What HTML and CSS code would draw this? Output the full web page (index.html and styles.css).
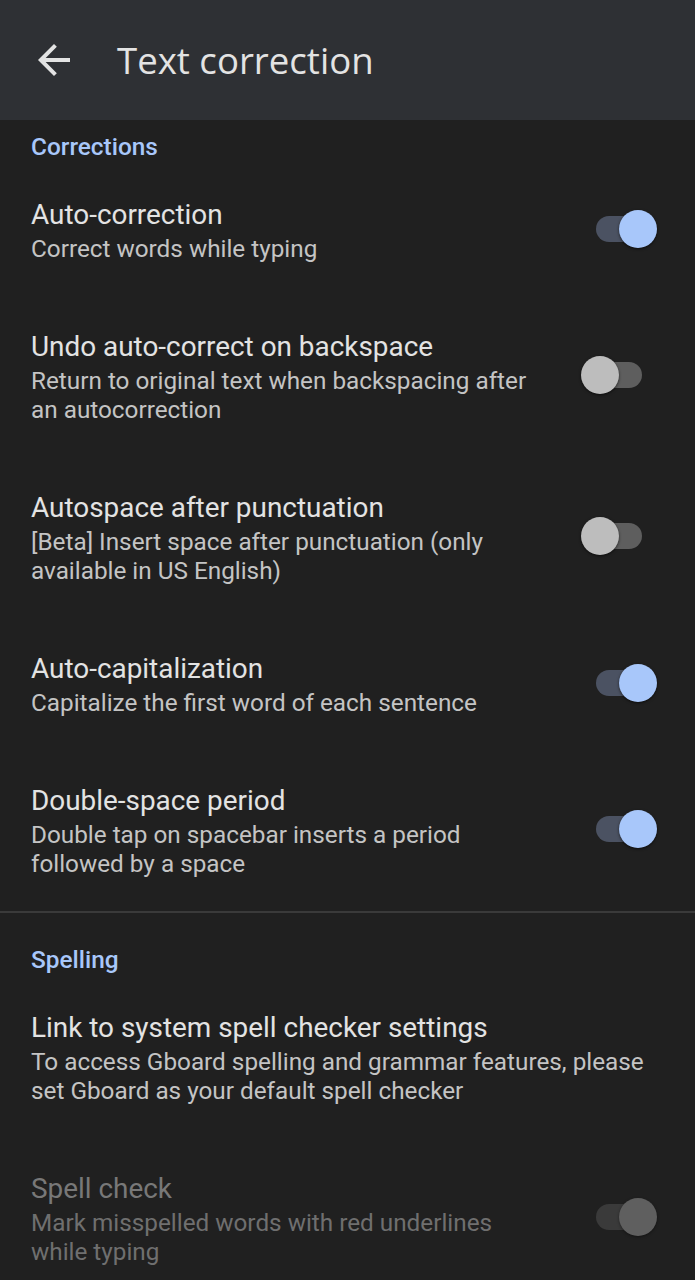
FILE: index.html
```html
<!DOCTYPE html>
<html>
<head>
<meta charset="utf-8">
<link rel="stylesheet" href="styles.css">
</head>
<body>
<div class="app">
  <header class="topbar">
    <svg class="back" viewBox="0 0 24 24" width="48" height="48"><path d="M20 11H7.83l5.59-5.59L12 4l-8 8 8 8 1.41-1.41L7.83 13H20v-2z" fill="#e3e3e3"/></svg>
    <h1 class="title">Text correction</h1>
  </header>

  <div class="category first">Corrections</div>

  <div class="row">
    <div class="text">
      <div class="label">Auto-correction</div>
      <div class="sub">Correct words while typing</div>
    </div>
    <div class="switch on"><span class="track"></span><span class="thumb"></span></div>
  </div>

  <div class="row">
    <div class="text">
      <div class="label">Undo auto-correct on backspace</div>
      <div class="sub">Return to original text when backspacing after an autocorrection</div>
    </div>
    <div class="switch off"><span class="track"></span><span class="thumb"></span></div>
  </div>

  <div class="row">
    <div class="text">
      <div class="label">Autospace after punctuation</div>
      <div class="sub">[Beta] Insert space after punctuation (only available in US English)</div>
    </div>
    <div class="switch off"><span class="track"></span><span class="thumb"></span></div>
  </div>

  <div class="row">
    <div class="text">
      <div class="label">Auto-capitalization</div>
      <div class="sub">Capitalize the first word of each sentence</div>
    </div>
    <div class="switch on"><span class="track"></span><span class="thumb"></span></div>
  </div>

  <div class="row">
    <div class="text">
      <div class="label">Double-space period</div>
      <div class="sub">Double tap on spacebar inserts a period followed by a space</div>
    </div>
    <div class="switch on"><span class="track"></span><span class="thumb"></span></div>
  </div>

  <div class="divider"></div>

  <div class="category">Spelling</div>

  <div class="row">
    <div class="text wide">
      <div class="label">Link to system spell checker settings</div>
      <div class="sub">To access Gboard spelling and grammar features, please set Gboard as your default spell checker</div>
    </div>
  </div>

  <div class="row disabled">
    <div class="text">
      <div class="label">Spell check</div>
      <div class="sub">Mark misspelled words with red underlines while typing</div>
    </div>
    <div class="switch on dis"><span class="track"></span><span class="thumb"></span></div>
  </div>
</div>
</body>
</html>
```

FILE: styles.css
```css
html, body {
  margin: 0;
  padding: 0;
  background: #202020;
}
.app {
  width: 695px;
  height: 1280px;
  overflow: hidden;
  background: #202020;
  font-family: Roboto, "Liberation Sans", sans-serif;
}
.topbar {
  height: 120px;
  background: #2e3034;
  display: flex;
  align-items: center;
}
.back {
  margin-left: 30px;
  flex: none;
}
.title {
  margin: 0 0 0 39px;
  font-family: "Open Sans", Roboto, sans-serif;
  font-weight: 400;
  font-size: 36.6px;
  color: #e3e3e3;
  line-height: 40px;
}
.category {
  padding: 33px 31px 4px;
  font-size: 24.4px;
  font-weight: 500;
  line-height: 28px;
  color: #a8c7fa;
}
.category.first {
  padding-top: 13px;
}
.row {
  display: flex;
  align-items: center;
  padding: 33px 38px 34px 31px;
}
.text {
  flex: 1;
  max-width: 505px;
  margin-right: auto;
}
.text.wide {
  max-width: none;
}
.label {
  font-size: 27.9px;
  line-height: 34px;
  color: #e3e3e3;
  margin-bottom: 2px;
}
.sub {
  font-size: 24.3px;
  line-height: 29px;
  color: #c4c4c4;
}
.disabled .label { color: #787878; }
.disabled .sub { color: #6f6f6f; }
.switch {
  position: relative;
  width: 76px;
  height: 38px;
  flex: none;
  margin-top: -4px;
}
.track {
  position: absolute;
  left: 15px;
  top: 6px;
  width: 46px;
  height: 26px;
  border-radius: 13px;
}
.thumb {
  position: absolute;
  top: 0;
  width: 38px;
  height: 38px;
  border-radius: 50%;
  box-shadow: 0 1px 3px rgba(0,0,0,0.6);
}
.on .track { background: #4b5262; }
.on .thumb { left: 38px; background: #a8c7fa; }
.off .track { background: #5e5e5e; }
.off .thumb { left: 0; background: #bdbdbd; }
.dis .track { background: #3a3a3a; }
.dis .thumb { background: #5f5f5f; box-shadow: 0 1px 3px rgba(0,0,0,0.4); }
.divider {
  height: 2px;
  background: #3a3a3a;
  margin-top: -1px;
}
```
